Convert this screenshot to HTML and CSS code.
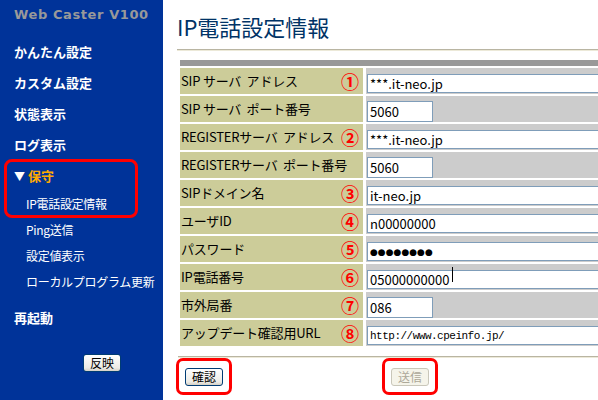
FILE: index.html
```html
<!DOCTYPE html>
<html lang="ja">
<head>
    <meta charset="UTF-8">
    <title>IP電話設定情報</title>
    <link rel="stylesheet" href="styles.css">
</head>
<body>
<div class="page">
    <div class="side">
        <div class="brand">Web Caster V100</div>
        <div class="menu">かんたん設定</div>
        <div class="menu">カスタム設定</div>
        <div class="menu">状態表示</div>
        <div class="menu">ログ表示</div>
        <div class="mark">
            <div class="menu open"><span class="arrow">▼</span> 保守</div>
            <div class="sub">IP電話設定情報</div>
        </div>
        <div class="sub">Ping送信</div>
        <div class="sub">設定値表示</div>
        <div class="sub">ローカルプログラム更新</div>
        <div class="menu reboot">再起動</div>
        <div class="apply"><button class="btn">反映</button></div>
    </div>

    <div class="content">
        <h1>IP電話設定情報</h1>
        <table class="form">
            <colgroup><col class="col-label"><col class="col-value"></colgroup>
            <tr class="head"><td colspan="2"></td></tr>
            <tr><th>SIP サーバ&nbsp; アドレス<span class="num">①</span></th><td><input class="wide" value="***.it-neo.jp"></td></tr>
            <tr><th>SIP サーバ&nbsp; ポート番号</th><td><input class="short" value="5060"></td></tr>
            <tr><th>REGISTERサーバ&nbsp; アドレス<span class="num">②</span></th><td><input class="wide" value="***.it-neo.jp"></td></tr>
            <tr><th>REGISTERサーバ&nbsp; ポート番号</th><td><input class="short" value="5060"></td></tr>
            <tr><th>SIPドメイン名<span class="num">③</span></th><td><input class="wide" value="it-neo.jp"></td></tr>
            <tr><th>ユーザID<span class="num">④</span></th><td><input class="wide" value="n00000000"></td></tr>
            <tr><th>パスワード<span class="num">⑤</span></th><td><input class="wide pw" value="●●●●●●●●"></td></tr>
            <tr><th>IP電話番号<span class="num">⑥</span></th><td><span class="field"><input class="wide" value="05000000000"><span class="caret"></span></span></td></tr>
            <tr><th>市外局番<span class="num">⑦</span></th><td><input class="short" value="086"></td></tr>
            <tr><th>アップデート確認用URL<span class="num">⑧</span></th><td><input class="wide mono" value="http://www.cpeinfo.jp/"></td></tr>
        </table>
        <div class="rule"></div>
        <div class="actions">
            <span class="mark-btn"><button class="btn">確認</button></span>
            <span class="mark-btn send"><button class="btn" disabled>送信</button></span>
        </div>
    </div>
</div>
</body>
</html>
```

FILE: styles.css
```css
html, body { margin: 0; padding: 0; overflow: hidden; }
body { font-family: "Noto Sans CJK JP", "DejaVu Sans", sans-serif; background: #fff; }
.page { display: flex; height: 400px; }

/* sidebar */
.side { width: 163px; flex: none; background: #003399; color: #fff; }
.brand { font-family: "DejaVu Sans", sans-serif; font-weight: bold; font-size: 13px; letter-spacing: 0.6px; color: #999; line-height: 30px; padding-left: 14px; margin-bottom: 6px; }
.menu { height: 31px; line-height: 31px; padding-left: 14px; font-size: 13px; font-weight: bold; }
.sub { height: 26px; line-height: 26px; padding-left: 26px; font-size: 12px; letter-spacing: -0.3px; }
.mark { margin: 0 26px 0 5px; border-radius: 7px; outline: 3px solid #ff0000; outline-offset: -2px; }
.mark .menu { padding-left: 9px; }
.mark .sub { padding-left: 21px; }
.open { color: #ffaa00; }
.arrow { color: #fff; font-size: 11px; }
.reboot { margin-top: 7px; }
.apply { margin-top: 16px; padding-left: 83px; }

.btn { font-family: "Noto Sans CJK JP", sans-serif; font-size: 12px; line-height: 14px; height: 18px; width: 38px; padding: 0; color: #000; border: 1px solid #003c74; border-radius: 3px; background: linear-gradient(#ffffff, #ecebe6 80%, #d6d0c5); }
.btn:disabled { color: #aca899; border-color: #c9c7ba; background: #f5f4ea; }

/* main */
.content { flex: 1; padding-left: 14px; overflow: hidden; }
h1 { margin: 11px 0 0 0; padding-bottom: 8px; font-size: 22px; line-height: 30px; font-weight: normal; color: #003366; border-bottom: 1px solid #b9b5a2; box-shadow: 0 1px 0 #ece9d8; }

.form { border-collapse: separate; border-spacing: 3px 2px; margin-top: 8px; table-layout: fixed; width: 449px; }
.col-label { width: 183px; }
.col-value { width: 257px; }
.form th { height: 26px; line-height: 26px; padding: 0 4px 0 1px; text-align: left; font-size: 13px; font-weight: normal; letter-spacing: -0.2px; color: #000; background: #cccc99; white-space: nowrap; }
.form td { height: 26px; padding: 0 0 0 1px; background: #ccc; }
.form .head td { height: 6px; padding: 0; background: #999; }
.num { float: right; color: #ff0000; font-size: 18px; font-weight: bold; line-height: 26px; letter-spacing: 0; }

input { box-sizing: border-box; font-family: "Noto Sans CJK JP", sans-serif; font-size: 13px; color: #000; border: 1px solid #7f9db9; background: #fff; padding: 0 2px; vertical-align: middle; }
.wide { width: 100%; height: 19px; }
.short { width: 66px; height: 21px; }
.pw { font-family: "DejaVu Sans", sans-serif; font-size: 9px; letter-spacing: 0; }
.mono { font-family: "Liberation Mono", monospace; font-size: 11px; letter-spacing: -0.5px; }
.field { position: relative; display: block; }
.caret { position: absolute; left: 85px; top: 2px; width: 1px; height: 15px; background: #000; }

.rule { margin: 8px 0 0 1px; border-top: 1px solid #b9b5a2; border-bottom: 1px solid #ece9d8; }
.actions { display: flex; align-items: flex-start; margin-left: -1px; }
.mark-btn { display: inline-block; border: 3px solid #ff0000; border-radius: 7px; padding: 7px 6px 6px; }
.mark-btn .btn { display: block; }
.send { margin-left: 150px; }
```
